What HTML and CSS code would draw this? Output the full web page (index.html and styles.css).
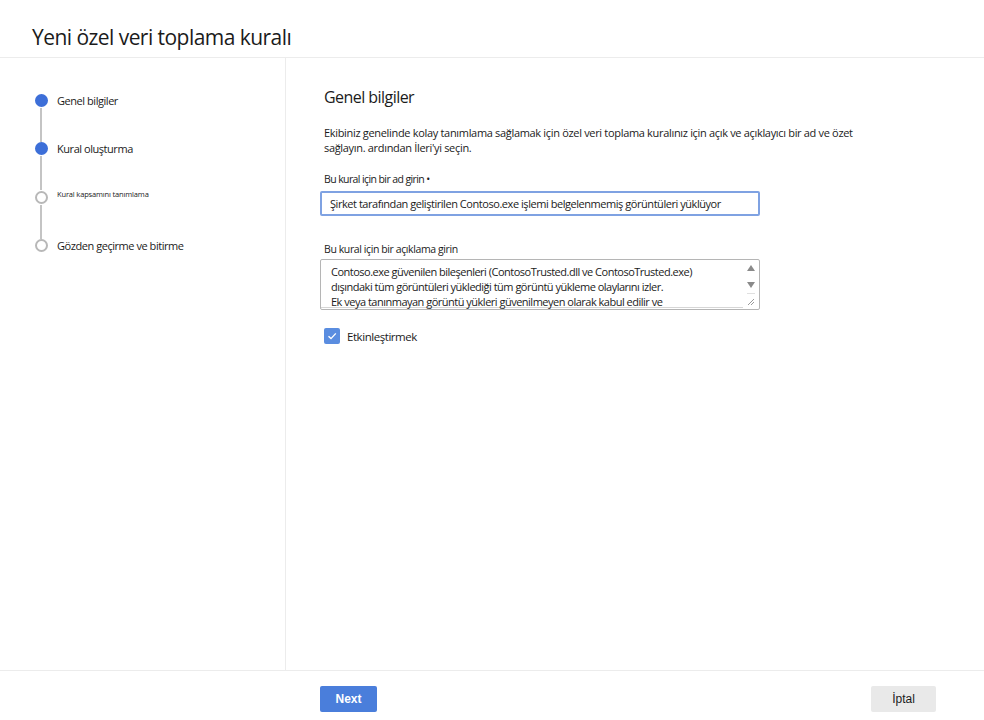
FILE: index.html
```html
<!DOCTYPE html>
<html lang="tr">
<head>
    <meta charset="UTF-8">
    <meta name="viewport" content="width=device-width, initial-scale=1.0">
    <title>Yeni özel veri toplama kuralı</title>
    <link rel="stylesheet" href="styles.css">
</head>
<body>
    <div class="panel">
        <header class="panel-header">
            <h1>Yeni özel veri toplama kuralı</h1>
        </header>

        <div class="panel-body">
            <nav class="steps">
                <div class="step done">
                    <span class="dot"></span>
                    <span class="step-label">Genel bilgiler</span>
                </div>
                <div class="step done">
                    <span class="dot"></span>
                    <span class="step-label">Kural oluşturma</span>
                </div>
                <div class="step">
                    <span class="dot"></span>
                    <span class="step-label small">Kural kapsamını tanımlama</span>
                </div>
                <div class="step last">
                    <span class="dot"></span>
                    <span class="step-label">Gözden geçirme ve bitirme</span>
                </div>
            </nav>

            <main class="content">
                <h2>Genel bilgiler</h2>
                <p class="intro">
                    Ekibiniz genelinde kolay tanımlama sağlamak için özel veri toplama kuralınız için açık ve açıklayıcı bir ad ve özet
                    sağlayın. ardından İleri'yi seçin.
                </p>

                <label class="field-label name" for="ruleName">Bu kural için bir ad girin •</label>
                <input class="text-input" id="ruleName" type="text" value="Şirket tarafından geliştirilen Contoso.exe işlemi belgelenmemiş görüntüleri yüklüyor">

                <label class="field-label desc" for="ruleDesc">Bu kural için bir açıklama girin</label>
                <div class="textarea-box">
                    <div class="textarea-text" id="ruleDesc">
                        Contoso.exe güvenilen bileşenleri (ContosoTrusted.dll ve ContosoTrusted.exe)<br>
                        dışındaki tüm görüntüleri yüklediği tüm görüntü yükleme olaylarını izler.<br>
                        Ek veya tanınmayan görüntü yükleri güvenilmeyen olarak kabul edilir ve
                    </div>
                    <div class="scrollbar">
                        <span class="arrow up"></span>
                        <span class="arrow down"></span>
                        <span class="grip">
                            <svg width="8" height="8" viewBox="0 0 8 8">
                                <path d="M7 1L1 7M7 4L4 7" stroke="#9a9a9a" stroke-width="1"/>
                            </svg>
                        </span>
                    </div>
                </div>

                <label class="check">
                    <span class="box">
                        <svg width="12" height="12" viewBox="0 0 12 12">
                            <path d="M2.5 6.2L5 8.6L9.8 3.4" fill="none" stroke="#fff" stroke-width="1.4"/>
                        </svg>
                    </span>
                    Etkinleştirmek
                </label>
            </main>
        </div>

        <footer class="panel-footer">
            <button class="btn primary">Next</button>
            <button class="btn secondary">İptal</button>
        </footer>
    </div>
</body>
</html>
```

FILE: styles.css
```css
body {
    margin: 0;
    font-family: "Open Sans", "Liberation Sans", sans-serif;
    color: #1b1b1b;
    background: #fff;
}

.panel {
    width: 984px;
    height: 720px;
    display: flex;
    flex-direction: column;
}

.panel-header {
    height: 58px;
    flex: none;
    border-bottom: 1px solid #ececec;
    box-sizing: border-box;
    padding: 23px 0 0 32px;
}

.panel-header h1 {
    margin: 0;
    font-size: 21px;
    font-weight: 400;
    letter-spacing: -0.55px;
    line-height: 28px;
}

.panel-body {
    flex: 1;
    display: flex;
    border-bottom: 1px solid #ececec;
}

/* wizard steps */
.steps {
    width: 286px;
    border-right: 1px solid #ececec;
    padding: 36px 0 0 35px;
    box-sizing: border-box;
}

.step {
    display: flex;
    align-items: flex-start;
    height: 48.3px;
    position: relative;
}

.step::after {
    content: "";
    position: absolute;
    left: 5px;
    top: 14px;
    width: 2px;
    height: 34px;
    background: #c4c4c4;
}

.step.last::after {
    display: none;
}

.dot {
    width: 9px;
    height: 9px;
    border-radius: 50%;
    border: 2px solid #b8b8b8;
    background: #fff;
    flex: none;
}

.step.done .dot {
    background: #3d6fd8;
    border-color: #3d6fd8;
}

.step-label {
    margin-left: 9px;
    font-size: 11px;
    line-height: 13px;
    letter-spacing: -0.45px;
}

.step-label.small {
    font-size: 7.5px;
    line-height: 9px;
    letter-spacing: -0.15px;
    margin-top: -1px;
}

/* form */
.content {
    flex: 1;
    padding: 28px 0 0 38px;
}

.content h2 {
    margin: 0 0 17px 0;
    font-size: 16px;
    font-weight: 400;
    letter-spacing: -0.55px;
    line-height: 22px;
}

.intro {
    margin: 0 0 17px 0;
    width: 540px;
    font-size: 11px;
    line-height: 15px;
    letter-spacing: -0.32px;
}

.field-label {
    display: block;
    font-size: 10.5px;
    line-height: 14px;
    letter-spacing: -0.4px;
}

.field-label.name {
    letter-spacing: -0.6px;
}

.field-label.desc {
    margin-top: 26px;
}

.text-input {
    display: block;
    margin: 5px 0 0 -4px;
    width: 440px;
    height: 25px;
    box-sizing: border-box;
    border: 2px solid #7fa2e2;
    border-radius: 2px;
    padding: 0 8px;
    font-family: inherit;
    font-size: 11px;
    letter-spacing: -0.45px;
    color: #1b1b1b;
    outline: none;
}

.textarea-box {
    margin: 3px 0 0 -4px;
    width: 440px;
    height: 51px;
    box-sizing: border-box;
    border: 1px solid #b5b5b5;
    border-radius: 2px;
    display: flex;
    overflow: hidden;
}

.textarea-text {
    flex: 1;
    padding: 4px 0 0 10px;
    font-size: 11px;
    line-height: 15px;
    letter-spacing: -0.5px;
    border-bottom: 1px solid #d6d6d6;
    margin-bottom: 1px;
    white-space: nowrap;
}

.scrollbar {
    width: 16px;
    display: flex;
    flex-direction: column;
    align-items: center;
    padding-top: 5px;
}

.arrow {
    width: 0;
    height: 0;
    border-left: 4px solid transparent;
    border-right: 4px solid transparent;
}

.arrow.up {
    border-bottom: 6px solid #8a8a8a;
}

.arrow.down {
    margin-top: 11px;
    border-top: 6px solid #8a8a8a;
}

.grip {
    margin-top: 5px;
    line-height: 0;
    border-top: 1px solid #e0e0e0;
    padding-top: 4px;
}

.check {
    display: flex;
    align-items: center;
    margin-top: 18px;
    font-size: 11.5px;
    letter-spacing: -0.45px;
}

.check .box {
    width: 16px;
    height: 16px;
    background: #5a8de0;
    border-radius: 2px;
    display: flex;
    align-items: center;
    justify-content: center;
    margin-right: 7px;
}

/* footer */
.panel-footer {
    height: 49px;
    flex: none;
    box-sizing: border-box;
    display: flex;
    align-items: flex-start;
    justify-content: space-between;
    padding: 15px 48px 0 320px;
}

.btn {
    height: 26px;
    border: none;
    border-radius: 2px;
    font-family: "Liberation Sans", sans-serif;
    font-size: 12px;
    cursor: pointer;
}

.btn.primary {
    width: 57px;
    background: #4a7edb;
    color: #fff;
    font-weight: 700;
}

.btn.secondary {
    width: 65px;
    background: #e9e9e9;
    color: #1b1b1b;
}
```
